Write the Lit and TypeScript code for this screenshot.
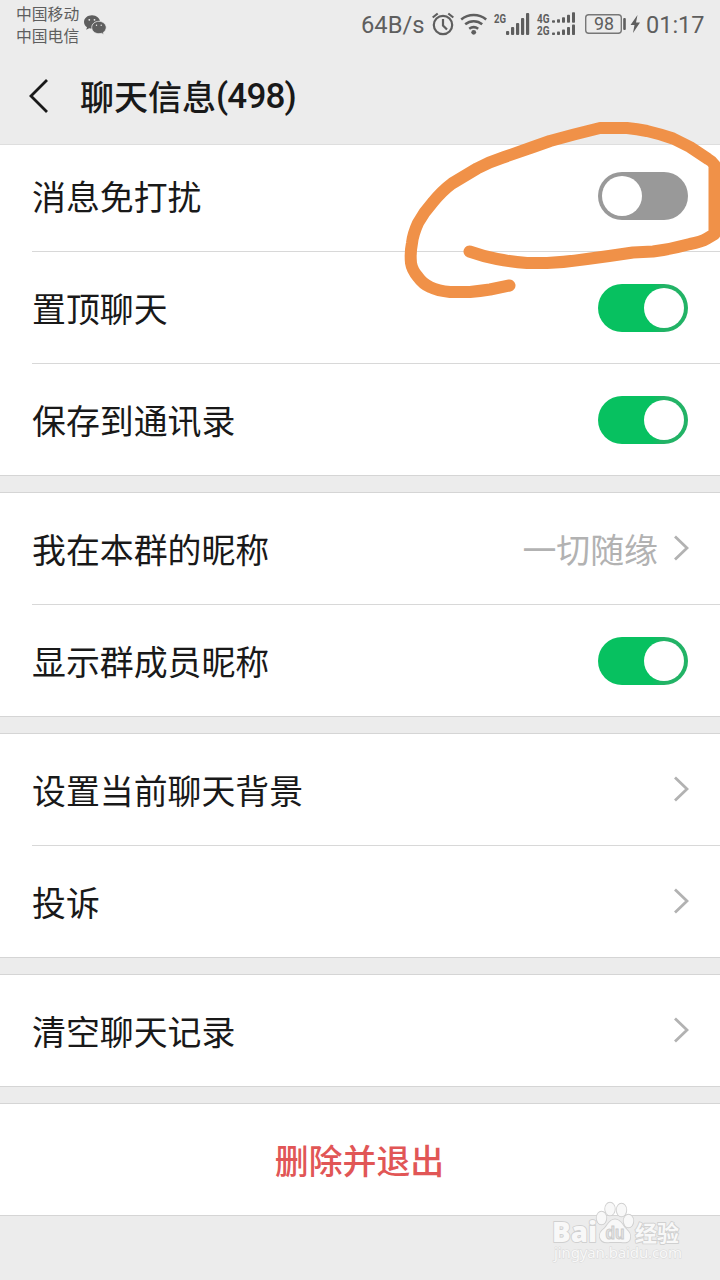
import { LitElement, html, svg, css, nothing } from "lit";
import { customElement, property } from "lit/decorators.js";

@customElement("toggle-switch")
class ToggleSwitch extends LitElement {
  @property({ type: Boolean, reflect: true }) on = false;

  static styles = css`
    :host {
      display: flex;
      box-sizing: border-box;
      width: 90px;
      height: 48px;
      padding: 4px;
      border-radius: 24px;
      background: #999;
    }
    :host([on]) {
      justify-content: flex-end;
      background: linear-gradient(90deg, #07c160 60%, #22b366 72%);
    }
    .knob {
      width: 40px;
      height: 40px;
      border-radius: 50%;
      background: #fff;
    }
  `;

  render() {
    return html`<div class="knob"></div>`;
  }
}

@customElement("status-bar")
class StatusBar extends LitElement {
  static styles = css`
    :host {
      display: flex;
      height: 50px;
      color: #5e5e5e;
      font-family: Roboto, "Noto Sans CJK SC", sans-serif;
    }
    .carriers {
      padding: 3px 0 0 16px;
      font: 15.8px/22px "Noto Sans CJK SC", sans-serif;
      width: 66px;
      white-space: nowrap;
    }
    .wechat {
      margin: 14px 0 0 1px;
    }
    .right {
      margin-left: auto;
    }
    svg {
      display: block;
    }
    text {
      font-family: Roboto, sans-serif;
      fill: #5e5e5e;
    }
    .net {
      font-family: Roboto, sans-serif;
      font-weight: 700;
    }
  `;

  render() {
    const big = [[506, 31, 3], [511, 27, 7], [516, 23, 11], [521, 18, 16], [526, 13, 21]];
    const small = [[552, 2.5], [557, 3.5], [562, 5.5], [567, 8], [572, 10.5]];
    return html`
      <div class="carriers">中国移动<br />中国电信</div>
      <svg class="wechat" width="24" height="22" viewBox="0 0 24 22">
        <path fill="#5e5e5e" d="M9 1.2C4.500 1.200 1 4.100 1 8c0 2.200 1.200 4 3 5.200l-.8 2.500 3-1.500c.9.200 1.800.4 2.800.4 4.500 0 8-3 8-6.700S13.500 1.200 9 1.200z"/>
        <path fill="#5e5e5e" stroke="#ececec" stroke-width=".8" d="M15.900 7.300c-4 0-7.200 2.700-7.200 6.200s3.200 6.200 7.200 6.200c.9 0 1.700-.1 2.500-.4l2.600 1.400-.7-2.300c1.800-1.100 2.900-2.900 2.900-4.900 0-3.500-3.300-6.200-7.300-6.200z"/>
        <g fill="#ececec"><circle cx="6.300" cy="5.800" r=".9"/><circle cx="11.500" cy="5.800" r=".9"/><circle cx="13.500" cy="11.300" r=".7"/><circle cx="18.200" cy="11.300" r=".7"/></g>
      </svg>
      <svg class="right" width="370" height="50" viewBox="350 0 370 50">
        <text x="361" y="33" font-size="24" textLength="63.500" lengthAdjust="spacingAndGlyphs">64B/s</text>
        <g fill="none" stroke="#5e5e5e" stroke-width="2.200">
          <circle cx="443" cy="25" r="9.200"/>
          <path d="M443 19v6.500l4 4M432.700 17.500l5-4M453.300 17.500l-5-4"/>
        </g>
        <g fill="none" stroke="#5e5e5e" stroke-width="2.500">
          <path d="M461.200 19.500c7.200-6 17.800-6 25 0M465.200 24.300c4.900-4.100 12.100-4.100 17 0M469.200 28.800c2.700-2 6.300-2 9 0"/>
        </g>
        <circle cx="473.700" cy="32.300" r="2.400" fill="#5e5e5e"/>
        <text class="net" x="494" y="23" font-size="12.500" textLength="12" lengthAdjust="spacingAndGlyphs">2G</text>
        ${big.map(([x, y, h]) => svg`<rect x=${x} y=${y} width="3.200" height=${h + 1} rx="1" fill="#5e5e5e"/>`)}
        <text class="net" x="537" y="22.500" font-size="12.500" textLength="12.500" lengthAdjust="spacingAndGlyphs">4G</text>
        <text class="net" x="537" y="35" font-size="12.500" textLength="12.500" lengthAdjust="spacingAndGlyphs">2G</text>
        ${small.map(([x, h]) => svg`
          <rect x=${x} y=${22.800 - h} width="3" height=${h} rx=".8" fill="#5e5e5e"/>
          <rect x=${x} y=${35 - h} width="3" height=${h} rx=".8" fill="#5e5e5e"/>`)}
        <rect x="585.700" y="14.700" width="35.600" height="18.600" rx="3" fill="none" stroke="#777" stroke-width="1.400"/>
        <rect x="623.200" y="18" width="2.600" height="12" rx="1" fill="#5e5e5e"/>
        <text x="594" y="30" font-size="18.500" textLength="20" lengthAdjust="spacingAndGlyphs">98</text>
        <path fill="#5e5e5e" d="M637.500 15l-7 10h4l-1.500 8 7-10.500h-4z"/>
        <text x="646" y="33" font-size="24.500" textLength="58.500" lengthAdjust="spacingAndGlyphs">01:17</text>
      </svg>
    `;
  }
}

interface Item {
  label: string;
  value?: string;
  on?: boolean;
}

const groups: Item[][] = [
  [
    { label: "消息免打扰", on: false },
    { label: "置顶聊天", on: true },
    { label: "保存到通讯录", on: true },
  ],
  [
    { label: "我在本群的昵称", value: "一切随缘" },
    { label: "显示群成员昵称", on: true },
  ],
  [{ label: "设置当前聊天背景" }, { label: "投诉" }],
  [{ label: "清空聊天记录" }],
];

@customElement("app-root")
class AppRoot extends LitElement {
  static styles = css`
    :host {
      display: block;
      position: relative;
      width: 720px;
      height: 1280px;
      overflow: hidden;
      background: #ececec;
      color: #191919;
      font-family: "Noto Sans CJK SC", sans-serif;
    }
    .title-bar {
      display: flex;
      align-items: center;
      height: 94px;
      box-sizing: border-box;
      padding: 0 0 2px 28px;
    }
    .back {
      margin-right: 32px;
    }
    .title {
      display: flex;
      font-size: 34px;
      font-weight: 500;
      line-height: 52px;
      white-space: nowrap;
    }
    .count {
      padding-top: 2px;
      line-height: 50px;
      font-family: Roboto, sans-serif;
      font-size: 35px;
      letter-spacing: -0.8px;
    }
    .group {
      background: #fff;
      border-top: 1px solid #d5d5d5;
      margin-bottom: 16px;
    }
    .group.first {
      border-top-color: #dedede;
    }
    .row {
      display: flex;
      justify-content: space-between;
      align-items: flex-start;
      box-sizing: border-box;
      height: 112px;
      margin-left: 32px;
      padding: 32px 32px 0 0;
      border-bottom: 1px solid #d8d8d8;
      font-size: 33.9px;
      line-height: 48px;
    }
    .group.first .row:first-child {
      height: 107px;
      padding-top: 27px;
    }
    .group .row:last-child {
      margin-left: 0;
      padding-left: 32px;
      border-bottom-color: #d5d5d5;
    }
    .trail {
      display: flex;
      align-items: flex-start;
      color: #b2b2b2;
    }
    .arrow {
      margin: 9px -1px 0 15px;
    }
    .group .row.leave {
      justify-content: center;
      padding-left: 31px;
      color: #e15656;
      font-weight: 500;
    }
    .scribble,
    .watermark {
      position: absolute;
      left: 0;
      top: 0;
      pointer-events: none;
    }
    .watermark {
      left: 540px;
      top: 1190px;
    }
  `;

  private trail(item: Item) {
    if (item.on !== undefined) return html`<toggle-switch ?on=${item.on}></toggle-switch>`;
    return html`<div class="trail">
      ${item.value ? html`<span>${item.value}</span>` : nothing}
      <svg class="arrow" width="16" height="28" viewBox="0 0 16 28">
        <path d="M2 2.500L14 14 2 25.500" fill="none" stroke="#b2b2b2" stroke-width="2.800"/>
      </svg>
    </div>`;
  }

  render() {
    return html`
      <status-bar></status-bar>
      <div class="title-bar">
        <svg class="back" width="20" height="34" viewBox="0 0 20 34">
          <path d="M19 1L3 17l16 16" fill="none" stroke="#191919" stroke-width="2.800"/>
        </svg>
        <div class="title">聊天信息<span class="count">(498)</span></div>
      </div>
      ${groups.map(
        (items, i) => html`<div class="group ${i === 0 ? "first" : ""}">
          ${items.map((item) => html`<div class="row"><span>${item.label}</span>${this.trail(item)}</div>`)}
        </div>`
      )}
      <div class="group"><div class="row leave">删除并退出</div></div>

      <svg class="watermark" width="160" height="80" viewBox="540 1190 160 80">
        <g fill="#f8f8f8" stroke="#d0d0d0" stroke-width="1.800" paint-order="stroke" stroke-linejoin="round">
          <text x="552" y="1242" font-family="Open Sans" font-weight="800" font-size="28" textLength="45" lengthAdjust="spacingAndGlyphs">Bai</text>
          <path d="M615 1219.500c-5 0-7 5-10 8.500-4 3-6 6-5 9.500 1 4 5 5.500 10 4.500h11c5 1 9 0 9-4.500 1-4-2-6.500-5-9.500-3-4-5-8.500-10-8.500z"/>
          <ellipse cx="601.500" cy="1218" rx="4.800" ry="6.300"/>
          <ellipse cx="610" cy="1209" rx="4.800" ry="6.300"/>
          <ellipse cx="621.500" cy="1210" rx="4.800" ry="6.300"/>
          <ellipse cx="628.500" cy="1221" rx="4.800" ry="6.300"/>
          <text x="635" y="1240.500" font-family="Noto Sans CJK SC" font-weight="700" font-size="22" textLength="44" lengthAdjust="spacingAndGlyphs">经验</text>
        </g>
        <text x="605.500" y="1239" font-family="Liberation Sans" font-weight="700" font-size="18" textLength="19" lengthAdjust="spacingAndGlyphs" fill="#e4e4e4" stroke="#cccccc" stroke-width="1">du</text>
        <text x="554" y="1258" font-family="Noto Sans" font-size="15" textLength="128" lengthAdjust="spacing" fill="#f8f8f8" stroke="#d8d8d8" stroke-width="1" paint-order="stroke">jingyan.baidu.com</text>
      </svg>

      <svg class="scribble" width="720" height="310" viewBox="0 0 720 310">
        <path fill="none" stroke="#f09148" stroke-width="12" stroke-linecap="round" stroke-linejoin="round"
          d="M469.500 251.500Q482 256 497 259Q512 262 527 263H547Q567 262 587 259Q610 256 633 252.500L653 251.500Q672 249 690 244Q701 242 707 238.500L714.500 234V165Q712 161 708 159L690 147L673 138.500Q660 134 647 131Q637 129 627 128H600Q575 134 550 141L533 147L503 157.500Q489 162 477 168.500L452 183.500Q442 191 433 202Q424 212 418 223Q413 234 412 243Q410 253 411 263Q412 270 418 277Q423 284 430 287Q438 291 450 292H470Q480 291 490 289.500L509.500 285.500"/>
      </svg>
    `;
  }
}
